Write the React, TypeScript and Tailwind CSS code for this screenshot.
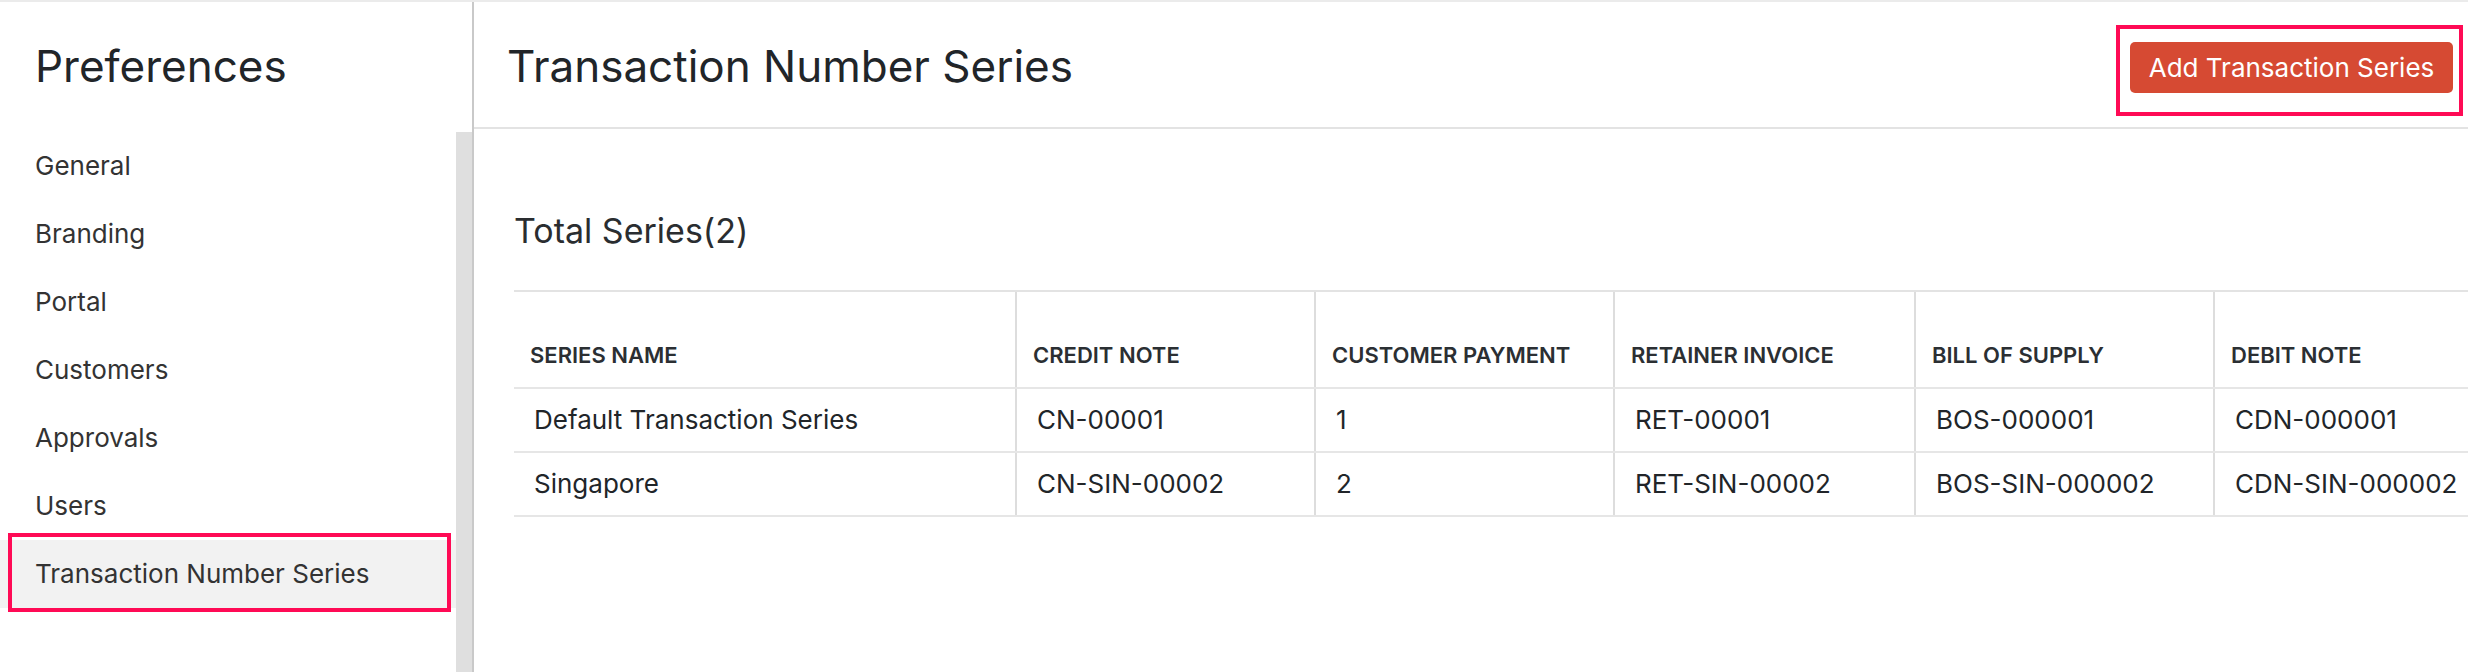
import React from "react";

const navItems = [
  "General",
  "Branding",
  "Portal",
  "Customers",
  "Approvals",
  "Users",
  "Transaction Number Series",
];

const columns = [
  { key: "name", label: "SERIES NAME", width: "w-[501px]" },
  { key: "creditNote", label: "CREDIT NOTE", width: "w-[299px] border-l-2" },
  { key: "payment", label: "CUSTOMER PAYMENT", width: "w-[299px] border-l-2" },
  { key: "retainer", label: "RETAINER INVOICE", width: "w-[301px] border-l-2" },
  { key: "bos", label: "BILL OF SUPPLY", width: "w-[299px] border-l-2" },
  { key: "debitNote", label: "DEBIT NOTE", width: "w-[300px] border-l-2" },
];

const series: Array<Record<string, string>> = [
  {
    name: "Default Transaction Series",
    creditNote: "CN-00001",
    payment: "1",
    retainer: "RET-00001",
    bos: "BOS-000001",
    debitNote: "CDN-000001",
  },
  {
    name: "Singapore",
    creditNote: "CN-SIN-00002",
    payment: "2",
    retainer: "RET-SIN-00002",
    bos: "BOS-SIN-000002",
    debitNote: "CDN-SIN-000002",
  },
];

const Sidebar = () => {
  const active = "Transaction Number Series";
  return (
    <aside className="w-[474px] flex-none flex flex-col border-r-2 border-[#c9c9c9]">
      <div className="h-[130px] pt-[42px] pl-[35px]">
        <h1 className="text-[44px] leading-[44px] text-[#212529]">Preferences</h1>
      </div>
      <div className="flex flex-1">
        <ul className="w-[456px] flex-none">
          {navItems.map((item) => (
            <li
              key={item}
              className={
                item === active
                  ? "relative h-[68px] flex items-center pl-[35px] text-[26px] leading-none text-[#333333] bg-[#f2f2f2]"
                  : "h-[68px] flex items-center pl-[35px] text-[26px] leading-none text-[#333333]"
              }
            >
              {item}
              {item === active && (
                <span className="absolute left-[8px] right-[5px] top-[-7px] bottom-[-4px] border-4 border-[#ff0a55]" />
              )}
            </li>
          ))}
        </ul>
        <div className="w-[16px] flex-none bg-[#dfdfdf]" />
      </div>
    </aside>
  );
};

const SeriesTable = () => {
  return (
    <div className="mt-[42px] border-t-2 border-[#e3e3e3]">
      <div className="flex h-[97px] border-b-2 border-[#e6e6e6]">
        {columns.map((col) => (
          <div
            key={col.key}
            className={`${col.width} flex-none flex items-end pb-[21px] pl-[16px] border-[#dddddd] text-[22px] leading-[22px] font-semibold text-[#2b2f33]`}
          >
            {col.label}
          </div>
        ))}
      </div>
      {series.map((row) => (
        <div key={row.name} className="flex h-[64px] border-b-2 border-[#e6e6e6]">
          {columns.map((col) => (
            <div
              key={col.key}
              className={`${col.width} flex-none flex items-center pl-[20px] border-[#dddddd] text-[26px] leading-none text-[#212529]`}
            >
              {row[col.key]}
            </div>
          ))}
        </div>
      ))}
    </div>
  );
};

export default function App() {
  return (
    <div className="w-[2468px] h-[672px] overflow-hidden bg-white border-t-2 border-[#ebebeb] flex font-[Inter,sans-serif]">
      <Sidebar />
      <main className="flex-1 min-w-0 flex flex-col overflow-hidden">
        <header className="h-[127px] flex-none flex justify-between items-start pt-[40px] pr-[15px] pl-[33px] border-b-2 border-[#e3e3e3]">
          <h2 className="mt-[2px] text-[44px] leading-[44px] text-[#212529]">
            Transaction Number Series
          </h2>
          <div className="relative">
            <button className="w-[323px] h-[51px] rounded-[5px] bg-[#d64a33] text-white text-[26px] leading-none">
              Add Transaction Series
            </button>
            <span className="absolute left-[-14px] right-[-10px] top-[-17px] bottom-[-23px] border-4 border-[#ff0a55]" />
          </div>
        </header>
        <section className="pl-[40px] pt-[85px]">
          <h3 className="text-[34px] leading-[34px] text-[#2a2d30]">Total Series(2)</h3>
          <SeriesTable />
        </section>
      </main>
    </div>
  );
}
